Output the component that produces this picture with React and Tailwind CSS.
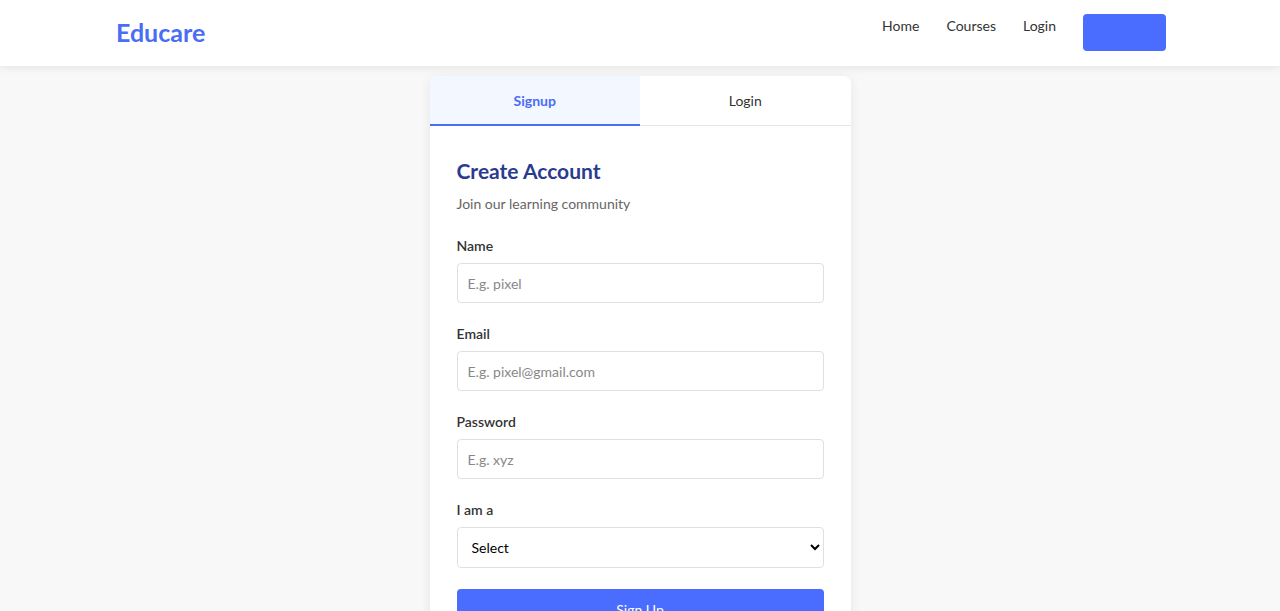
import { useState } from "react";

function Navbar() {
  return (
    <nav className="h-[66px] bg-white shadow-[0_2px_8px_rgba(0,0,0,0.08)] flex items-center justify-between pl-[116px] pr-[114px] relative z-10">
      <a className="text-[25px] font-bold text-[#4a6cf7]">Educare</a>
      <div className="flex items-center">
        <a className="text-[14px] text-[#333] mr-[27px] -mt-[15px]">Home</a>
        <a className="text-[14px] text-[#333] mr-[27px] -mt-[15px]">Courses</a>
        <a className="text-[14px] text-[#333] mr-[27px] -mt-[15px]">Login</a>
        <button className="w-[83px] h-[37px] rounded-[4px] bg-[#4a6cff] -mt-[1px]"></button>
      </div>
    </nav>
  );
}

function Field({ label, children }) {
  return (
    <div>
      <label className="block text-[14px] leading-[20px] font-semibold text-[#333] mb-[7px]">
        {label}
      </label>
      {children}
    </div>
  );
}

export default function App() {
  const [tab, setTab] = useState("signup");
  const inputCls =
    "w-full h-10 px-[10px] border border-[#e0e0e0] rounded-[4px] text-[14px] text-[#333] placeholder:text-[#888] outline-none";

  return (
    <div className="min-h-[611px] bg-[#f8f8f8] font-['Lato',sans-serif]">
      <Navbar />
      <div className="flex justify-center pt-[10px]">
        <div className="w-[421px] bg-white rounded-[8px] shadow-[0_2px_12px_rgba(0,0,0,0.08)] overflow-hidden">
          <div className="flex h-[50px]">
            <button
              onClick={() => setTab("signup")}
              className="flex-1 bg-[#f3f7ff] text-[#4a6cf7] font-bold text-[14px] border-b-2 border-[#4a6cf7]"
            >
              Signup
            </button>
            <button
              onClick={() => setTab("login")}
              className="flex-1 bg-white text-[#333] text-[14px] border-b border-[#e5e5e5]"
            >
              Login
            </button>
          </div>
          <div className="px-[27px] pt-[31px] pb-8">
            <h2 className="text-[21px] leading-[28px] font-bold text-[#2a3b8f]">Create Account</h2>
            <p className="text-[14px] leading-[20px] text-[#666] mt-[9px] mb-[22px]">
              Join our learning community
            </p>
            <div className="flex flex-col gap-[21px]">
              <Field label="Name">
                <input className={inputCls} placeholder="E.g. pixel" />
              </Field>
              <Field label="Email">
                <input className={inputCls} placeholder="E.g. pixel@gmail.com" />
              </Field>
              <Field label="Password">
                <input type="password" className={inputCls} placeholder="E.g. xyz" />
              </Field>
              <Field label="I am a">
                <select className="w-full h-[41px] px-[10px] border border-[#e0e0e0] rounded-[4px] text-[14px] text-black bg-white outline-none">
                  <option>Select</option>
                  <option>Student</option>
                  <option>Instructor</option>
                </select>
              </Field>
              <button className="w-full h-10 rounded-[4px] bg-[#4a6cff] text-white text-[14px]">
                Sign Up
              </button>
            </div>
          </div>
        </div>
      </div>
    </div>
  );
}
